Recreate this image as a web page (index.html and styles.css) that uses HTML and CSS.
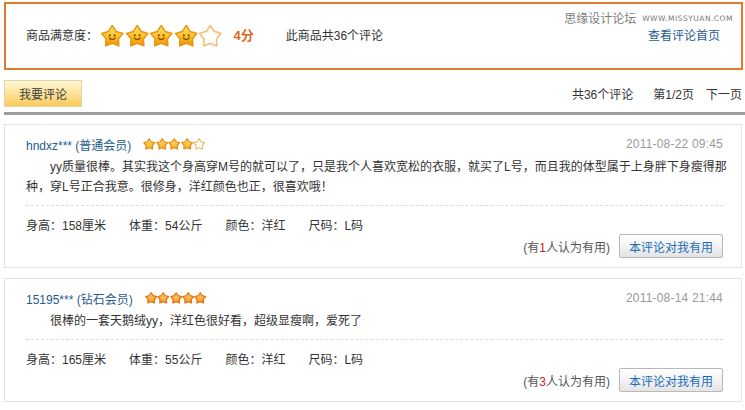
FILE: index.html
```html
<!DOCTYPE html>
<html lang="zh-CN">
<head>
<meta charset="utf-8">
<title>商品评论</title>
<link rel="stylesheet" href="styles.css">
</head>
<body>
<svg class="svg-defs" width="0" height="0" aria-hidden="true">
  <defs>
    <linearGradient id="gold" x1="0" y1="0" x2="0" y2="1">
      <stop offset="0" stop-color="#ffe774"/>
      <stop offset="0.5" stop-color="#fcc22c"/>
      <stop offset="1" stop-color="#ef9200"/>
    </linearGradient>
    <linearGradient id="gold-sm" x1="0" y1="0" x2="0" y2="1">
      <stop offset="0" stop-color="#ffe27a"/>
      <stop offset="1" stop-color="#f6aa1c"/>
    </linearGradient>
    <linearGradient id="orange-sm" x1="0" y1="0" x2="0" y2="1">
      <stop offset="0" stop-color="#ffd27a"/>
      <stop offset="1" stop-color="#f59a2a"/>
    </linearGradient>
    <symbol id="star-face" viewBox="0 0 24 24">
      <polygon points="12,1.5 15.88,7.46 22.75,9.31 18.28,14.84 18.64,21.94 12,19.4 5.36,21.94 5.72,14.84 1.25,9.31 8.12,7.46" fill="url(#gold)" stroke="#e8940e" stroke-width="1.4" stroke-linejoin="round"/>
      <ellipse cx="9.6" cy="11.4" rx="0.95" ry="1.15" fill="#7a4300"/>
      <ellipse cx="14.4" cy="11.4" rx="0.95" ry="1.15" fill="#7a4300"/>
      <path d="M9 14 Q12 17 15 14" fill="none" stroke="#7a4300" stroke-width="1.1" stroke-linecap="round"/>
    </symbol>
    <symbol id="star-empty" viewBox="0 0 24 24">
      <polygon points="12,1.5 15.88,7.46 22.75,9.31 18.28,14.84 18.64,21.94 12,19.4 5.36,21.94 5.72,14.84 1.25,9.31 8.12,7.46" fill="#fff" stroke="#f6c383" stroke-width="1.8" stroke-linejoin="round"/>
    </symbol>
    <symbol id="star-sm" viewBox="0 0 24 24">
      <polygon points="12,1.5 15.88,7.46 22.75,9.31 18.28,14.84 18.64,21.94 12,19.4 5.36,21.94 5.72,14.84 1.25,9.31 8.12,7.46" fill="url(#gold-sm)" stroke="#e48a0c" stroke-width="2.4" stroke-linejoin="round"/>
    </symbol>
    <symbol id="star-sm-empty" viewBox="0 0 24 24">
      <polygon points="12,1.5 15.88,7.46 22.75,9.31 18.28,14.84 18.64,21.94 12,19.4 5.36,21.94 5.72,14.84 1.25,9.31 8.12,7.46" fill="#fff" stroke="#f0b45a" stroke-width="2.2" stroke-linejoin="round"/>
    </symbol>
    <symbol id="star-sm-orange" viewBox="0 0 24 24">
      <polygon points="12,1.5 15.88,7.46 22.75,9.31 18.28,14.84 18.64,21.94 12,19.4 5.36,21.94 5.72,14.84 1.25,9.31 8.12,7.46" fill="url(#orange-sm)" stroke="#e57410" stroke-width="2.6" stroke-linejoin="round"/>
    </symbol>
  </defs>
</svg>

<div class="page">
  <section class="summary">
    <div class="watermark">思缘设计论坛 <span class="wm-url">WWW.MISSYUAN.COM</span></div>
    <span class="label">商品满意度：</span>
    <span class="stars-big">
      <svg class="star-big"><use href="#star-face"/></svg>
      <svg class="star-big"><use href="#star-face"/></svg>
      <svg class="star-big"><use href="#star-face"/></svg>
      <svg class="star-big"><use href="#star-face"/></svg>
      <svg class="star-big"><use href="#star-empty"/></svg>
    </span>
    <span class="score">4分</span>
    <span class="total">此商品共36个评论</span>
    <a class="home-link" href="#">查看评论首页</a>
  </section>

  <div class="toolbar">
    <button class="write-btn" type="button">我要评论</button>
    <div class="pager">
      <span>共36个评论</span>
      <span class="pg-cur">第1/2页</span>
      <a class="pg-next" href="#">下一页</a>
    </div>
  </div>
  <div class="rule"></div>

  <article class="card">
    <div class="card-head">
      <div class="who">
        <span class="user">hndxz*** (普通会员)</span>
        <span class="stars-sm">
          <svg class="star-small"><use href="#star-sm"/></svg>
          <svg class="star-small"><use href="#star-sm"/></svg>
          <svg class="star-small"><use href="#star-sm"/></svg>
          <svg class="star-small"><use href="#star-sm"/></svg>
          <svg class="star-small"><use href="#star-sm-empty"/></svg>
        </span>
      </div>
      <span class="date">2011-08-22 09:45</span>
    </div>
    <p class="content">yy质量很棒。其实我这个身高穿M号的就可以了，只是我个人喜欢宽松的衣服，就买了L号，而且我的体型属于上身胖下身瘦得那种，穿L号正合我意。很修身，洋红颜色也正，很喜欢哦！</p>
    <div class="attrs">
      <span>身高：158厘米</span>
      <span>体重：54公斤</span>
      <span>颜色：洋红</span>
      <span>尺码：L码</span>
    </div>
    <div class="card-foot">
      <span class="useful">(有<em>1</em>人认为有用)</span>
      <button class="useful-btn" type="button">本评论对我有用</button>
    </div>
  </article>

  <article class="card">
    <div class="card-head">
      <div class="who">
        <span class="user">15195*** (钻石会员)</span>
        <span class="stars-sm">
          <svg class="star-small"><use href="#star-sm-orange"/></svg>
          <svg class="star-small"><use href="#star-sm-orange"/></svg>
          <svg class="star-small"><use href="#star-sm-orange"/></svg>
          <svg class="star-small"><use href="#star-sm-orange"/></svg>
          <svg class="star-small"><use href="#star-sm-orange"/></svg>
        </span>
      </div>
      <span class="date">2011-08-14 21:44</span>
    </div>
    <p class="content">很棒的一套天鹅绒yy，洋红色很好看，超级显瘦啊，爱死了</p>
    <div class="attrs">
      <span>身高：165厘米</span>
      <span>体重：55公斤</span>
      <span>颜色：洋红</span>
      <span>尺码：L码</span>
    </div>
    <div class="card-foot">
      <span class="useful">(有<em>3</em>人认为有用)</span>
      <button class="useful-btn" type="button">本评论对我有用</button>
    </div>
  </article>
</div>
</body>
</html>
```

FILE: styles.css
```css
* {
  box-sizing: border-box;
  margin: 0;
  padding: 0;
}

html, body {
  background: #fff;
}

body {
  width: 745px;
  font-family: "Liberation Sans", "Noto Sans CJK SC", sans-serif;
  font-size: 12px;
  color: #333;
}

.svg-defs {
  position: absolute;
  width: 0;
  height: 0;
  overflow: hidden;
}

a {
  text-decoration: none;
}

.page {
  padding: 2px 0 0 4px;
}

/* ---------- summary box ---------- */
.summary {
  position: relative;
  width: 739px;
  height: 68px;
  border: 2px solid #e27a2d;
  display: flex;
  align-items: center;
  padding: 0 21px 0 20px;
  line-height: 16px;
}

.watermark {
  position: absolute;
  top: 7px;
  right: 8px;
  color: #808080;
  font-size: 12px;
  display: flex;
  align-items: center;
  gap: 6px;
}

.wm-url {
  font-family: "DejaVu Sans", sans-serif;
  font-size: 7.5px;
  letter-spacing: 0.5px;
  color: #7a7a7a;
}

.label {
  color: #333;
}

.stars-big {
  display: flex;
  margin-left: 2px;
}

.star-big {
  width: 24.5px;
  height: 24px;
  display: block;
}

.score {
  margin-left: 11px;
  color: #d86a1e;
  font-weight: bold;
  font-size: 13px;
}

.total {
  margin-left: 32px;
}

.home-link {
  margin-left: auto;
  color: #1f5c92;
}

/* ---------- toolbar ---------- */
.toolbar {
  margin-top: 10px;
  height: 27px;
  display: flex;
  align-items: center;
  padding-right: 3px;
}

.write-btn {
  width: 78px;
  height: 27px;
  border: 1px solid #e3d6a6;
  background: linear-gradient(#fff8d6, #fde29a 50%, #fbc95c);
  color: #3d3d3d;
  font: inherit;
  font-size: 12px;
  cursor: pointer;
}

.pager {
  margin-left: auto;
  display: flex;
  align-items: center;
  color: #333;
}

.pg-cur {
  margin-left: 20px;
}

.pg-next {
  margin-left: 12px;
  color: #333;
}

.rule {
  margin-top: 5px;
  height: 3px;
  background: #9c9c9c;
}

/* ---------- review cards ---------- */
.card {
  width: 738px;
  margin-top: 9px;
  border: 1px solid #e2e2e2;
  padding: 9px 18px 9px 21px;
}

.card + .card {
  margin-top: 10px;
}

.card-head {
  display: flex;
  align-items: center;
  justify-content: space-between;
  height: 20px;
}

.who {
  display: flex;
  align-items: center;
}

.user {
  color: #245b8f;
}

.stars-sm {
  display: flex;
  margin-left: 12px;
}

.star-small {
  width: 12.4px;
  height: 12px;
  display: block;
}

.date {
  color: #9a9a9a;
  font-size: 12px;
  letter-spacing: 0.2px;
}

.content {
  margin-top: 3px;
  margin-right: -12px;
  line-height: 20px;
  text-indent: 2em;
  color: #333;
}

.attrs {
  border-top: 1px dashed #dcdcdc;
  margin-top: 8px;
  padding-top: 12px;
  display: flex;
  gap: 23px;
  line-height: 16px;
}

.card-foot {
  display: flex;
  justify-content: flex-end;
  align-items: center;
  gap: 9px;
  height: 24px;
}

.useful {
  color: #555;
}

.useful em {
  font-style: normal;
  color: #cc2222;
}

.useful-btn {
  width: 104px;
  height: 24px;
  border: 1px solid #b8b8b8;
  border-radius: 2px;
  background: linear-gradient(#ffffff, #f3f3f3 50%, #e4e4e4);
  color: #1a6cb8;
  font: inherit;
  font-size: 12px;
  cursor: pointer;
}
```
